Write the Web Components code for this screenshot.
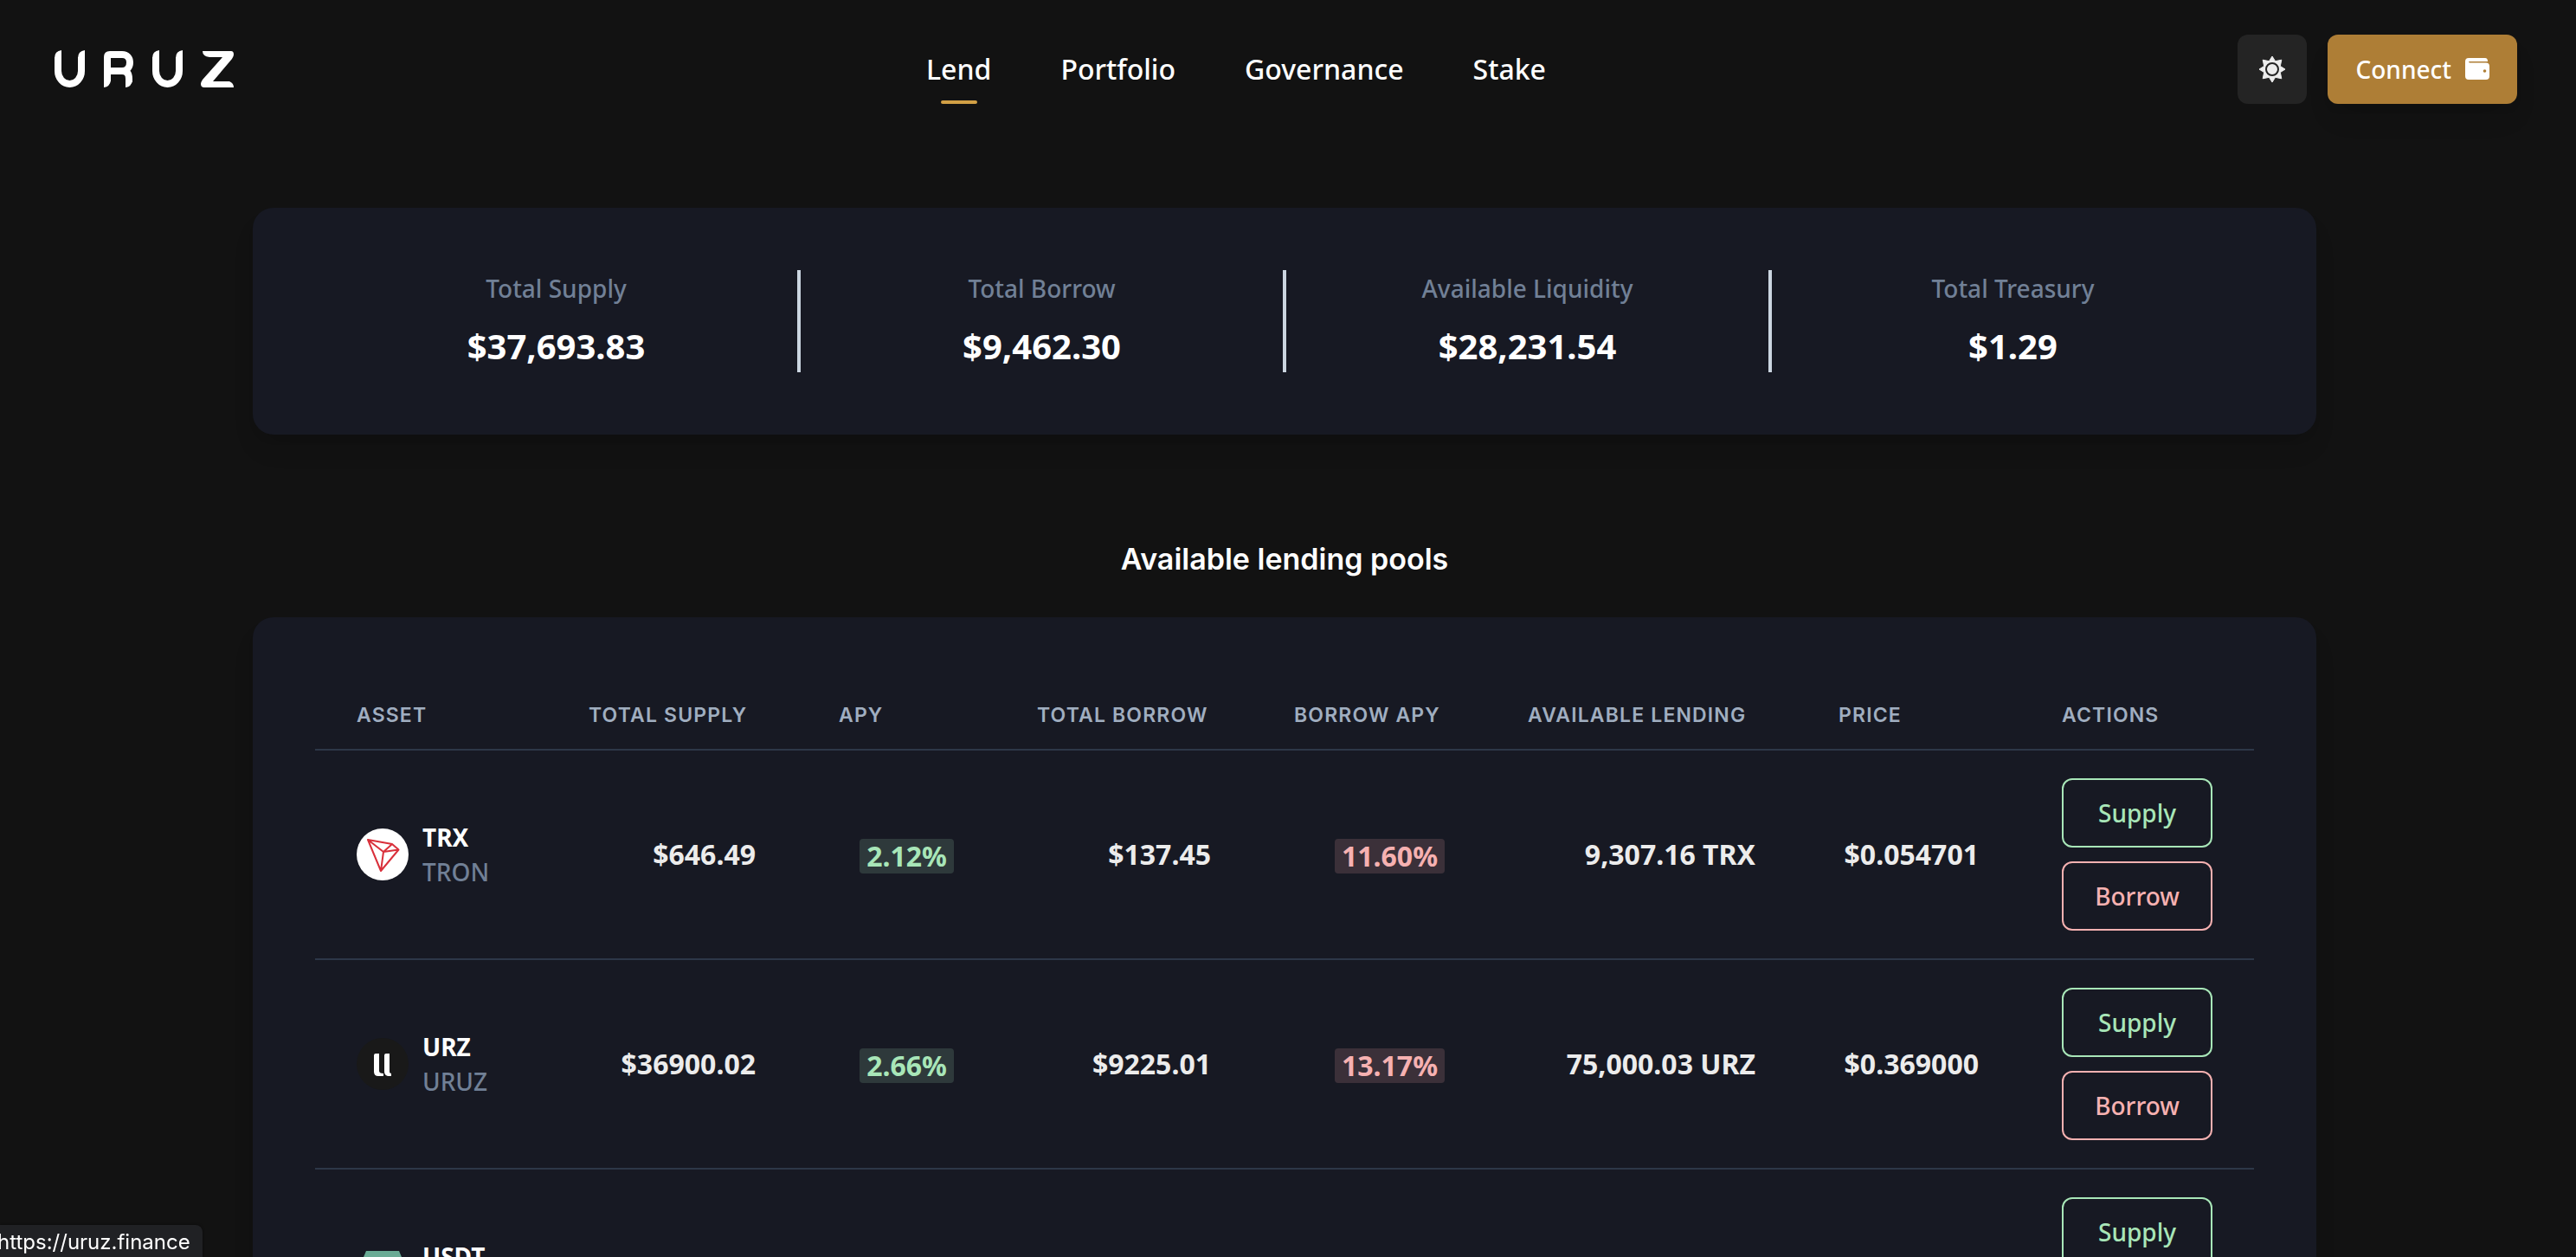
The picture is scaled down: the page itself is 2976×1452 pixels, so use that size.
<!DOCTYPE html>
<html lang="en">
<head>
<meta charset="utf-8">
<meta name="viewport" content="width=device-width, initial-scale=1">
<title>Uruz</title>
<style>
  :root {
    --bg: #121212;
    --card: #171923;
    --line: #2d3748;
    --muted: #718096;
    --head: #a0aec0;
    --green: #a8e6b8;
    --red: #f6b1b1;
    --gold: #d2a045;
  }
  body {
    margin: 0;
    background: var(--bg);
    color: #fff;
    font: 550 28px/40px "Noto Sans", sans-serif;
    height: 100vh;
    overflow: hidden;
  }
</style>
</head>
<body>
<uruz-app></uruz-app>
<script>
const define = (name, html, setup) => customElements.define(name, class extends HTMLElement {
  constructor() {
    super();
    this.attachShadow({ mode: "open" });
  }
  connectedCallback() {
    this.shadowRoot.innerHTML = "<style>*{box-sizing:border-box}</style>" + html;
    if (setup) setup(this, this.shadowRoot);
  }
});

define("uruz-logo", `
<style>
  :host { display: block; }
  a { display: block; }
  svg { display: block; }
</style>
<a href="#" aria-label="Home">
<svg width="208" height="44" viewBox="0 0 208 44" fill="none" stroke="#fff" stroke-width="8">
  <g id="bowl"><path d="M5 8V24a13.500 15 0 0 0 27 0V8"/><path d="M1 9Q1 1 9 0V9ZM28 9Q28 1 36 0V9Z" fill="#fff" stroke="none"/></g>
  <use href="#bowl" x="113"/>
  <path d="M62 36V8q0-3 3-3H79c6 0 9 4 9 9s-3 10-9 10H62M79 24q8 0 8 9v4"/>
  <path d="M58 35V43q7-1 8-8ZM83 35V43q7-1 8-8Z" fill="#fff" stroke="none"/>
  <path d="M172 1H205q3 0 3 4 0 2-2 5L184 36H203q5 2 5 7H174q-4 0-4-4 0-2 2-5L195 8H180q-8-1-8-7Z" fill="#fff" stroke="none"/>
</svg></a>`);

define("nav-link", `
<style>
  :host { display: block; }
  a { display: flex; flex-direction: column; align-items: center; color: #fff; text-decoration: none; font-size: 32px; line-height: 48px; padding-top: 56px; height: 120px; justify-content: space-between; }
  i { width: 42px; height: 4px; border-radius: 2px; }
  :host([active]) i { background: var(--gold); }
</style>
<a href="#"><slot></slot><i></i></a>`);

define("uruz-header", `
<style>
  :host { display: grid; grid-template-columns: 1fr auto 1fr; height: 160px; padding: 0 68px 0 62px; align-items: center; }
  nav { display: flex; gap: 80px; align-self: start; margin-right: 114px; }
  .tools { display: flex; gap: 24px; justify-content: flex-end; }
  .side { display: flex; }
  button { font: inherit; color: #fff; border: 0; border-radius: 12px; height: 80px; display: flex; align-items: center; justify-content: center; cursor: pointer; }
  .theme { width: 80px; background: #242424; padding: 0; }
  .connect { background: #ae7e36; padding: 0 32px; gap: 16px; box-shadow: 0 20px 30px -6px rgba(0,0,0,.1), 0 8px 12px -4px rgba(0,0,0,.06); }
</style>
<div class="side"><uruz-logo></uruz-logo></div>
<nav><nav-link active>Lend</nav-link><nav-link>Portfolio</nav-link><nav-link>Governance</nav-link><nav-link>Stake</nav-link></nav>
<div class="tools">
  <button class="theme" aria-label="Toggle theme">
    <svg width="32" height="32" viewBox="-16 -16 32 32" fill="#ededed">
      <path stroke="#ededed" stroke-width="1" stroke-linejoin="round" d="M0-15 L3.600-9.300 L10.800-10.800 L9.300-3.600 L15 0 L9.300 3.600 L10.800 10.800 L3.600 9.300 L0 15 L-3.600 9.300 L-10.800 10.800 L-9.300 3.600 L-15 0 L-9.300-3.600 L-10.800-10.800 L-3.600-9.300Z"/>
      <circle r="7" stroke="#242424" stroke-width="2"/>
    </svg>
  </button>
  <button class="connect"><span>Connect</span>
    <svg width="28" height="26" viewBox="0 0 28 26"><path fill="#fff" d="M4 0H23q3 0 3 4H5q-1 0-1 .5T5 5.500H24q4 0 4 4V21q0 4-4 4H4q-4 0-4-4V4q0-4 4-4Z"/><circle cx="22.500" cy="15" r="1.800" fill="#ae7e36"/></svg>
  </button>
</div>`);

define("stat-item", `
<style>
  :host { display: flex; flex-direction: column; align-items: center; gap: 16px; flex: 1 1 0; }
  .label { line-height: 42px; color: var(--muted); }
  .value { font-size: 40px; line-height: 60px; font-weight: 700; }
</style>
<div class="label"><slot name="label"></slot></div><div class="value"><slot></slot></div>`);

define("uruz-card", `
<style>
  :host { display: block; background: var(--card); border-radius: 24px; padding: 72px; box-shadow: 0 20px 30px -6px rgba(0,0,0,.1), 0 8px 12px -4px rgba(0,0,0,.05); }
</style>
<slot></slot>`);

define("stats-row", `
<style>
  .row { display: flex; }
  hr { width: 4px; margin: 0; border: 0; background: #cbd5e0; }
</style>
<div class="row">
<stat-item><span slot="label">Total Supply</span>$37,693.83</stat-item><hr>
<stat-item><span slot="label">Total Borrow</span>$9,462.30</stat-item><hr>
<stat-item><span slot="label">Available Liquidity</span>$28,231.54</stat-item><hr>
<stat-item><span slot="label">Total Treasury</span>$1.29</stat-item>
</div>`);

const coins = {
  TRX: `<circle cx="30" cy="30" r="30" fill="#fff"/><path fill="none" stroke="#d9303b" stroke-width="2" stroke-linejoin="round" d="M13 13L41 18L48.500 24.500L28 49ZM13 13L31 27L28 49M31 27L41 18M31 27L48.500 24.500"/>`,
  URZ: `<circle cx="30" cy="30" r="30" fill="#191919"/><path fill="#fff" d="M22 18H26V38Q26 41 31 41V44H25Q20 44 20 39V20Q20 18 22 18ZM34 18H38V39Q38 41 40 41V44H36Q32 43 32 39V20Q32 18 34 18Z"/>`,
  USDT: `<path fill="#6aab95" d="M11 4H49L60 30L30 57L0 30Z"/>`
};

define("asset-cell", `
<style>
  :host { display: flex; align-items: center; gap: 16px; text-align: left; }
  svg { display: block; }
  b { display: block; font-weight: 700; }
  span { display: block; color: var(--muted); }
</style>
<svg width="60" height="60" viewBox="0 0 60 60"></svg>
<div><b></b><span></span></div>`, (el, root) => {
  root.querySelector("svg").innerHTML = coins[el.getAttribute("symbol")];
  root.querySelector("b").textContent = el.getAttribute("symbol");
  root.querySelector("span").textContent = el.getAttribute("name");
});

define("apy-badge", `
<style>
  :host { display: inline-block; vertical-align: middle; font-size: 32px; line-height: 40px; font-weight: 700; padding: 0 8px; border-radius: 4px; color: var(--green); background: rgba(168,230,184,.16); }
  :host([kind="borrow"]) { color: var(--red); background: rgba(246,177,177,.16); }
</style><slot></slot>`);

define("action-button", `
<style>
  :host { display: block; color: var(--green); }
  :host([kind="borrow"]) { color: var(--red); }
  button { display: block; width: 100%; height: 80px; padding: 0; font: inherit; color: inherit; background: none; border: 2px solid; border-radius: 12px; cursor: pointer; }
</style><button><slot></slot></button>`);

define("pool-table", `
<style>
  table { width: 100%; table-layout: fixed; border-collapse: separate; border-spacing: 0; }
  th { padding: 25px 0 23px 48px; text-align: left; white-space: nowrap; font: 600 23px/32px Inter, sans-serif; letter-spacing: .05em; text-transform: uppercase; color: var(--head); border-bottom: 2px solid var(--line); }
  td { padding: 32px 48px; text-align: right; white-space: nowrap; border-bottom: 2px solid var(--line); }
  td.num { font-size: 32px; line-height: 48px; font-weight: 700; color: #ececec; padding-left: 0; }
  .actions { display: flex; flex-direction: column; gap: 16px; }
</style>
<table>
<colgroup><col style="width:268px"><col style="width:289px"><col style="width:229px"><col style="width:297px"><col style="width:270px"><col style="width:359px"><col style="width:258px"><col style="width:270px"></colgroup>
<thead><tr><th>Asset</th><th>Total Supply</th><th>APY</th><th>Total Borrow</th><th>Borrow APY</th><th>Available Lending</th><th>Price</th><th>Actions</th></tr></thead>
<tbody></tbody>
</table>`, (el, root) => {
  const rows = [
    ["TRX", "TRON", "$646.49", "2.12%", "$137.45", "11.60%", "9,307.16 TRX", "$0.054701"],
    ["URZ", "URUZ", "$36900.02", "2.66%", "$9225.01", "13.17%", "75,000.03 URZ", "$0.369000"],
    ["USDT", "", "", "", "", "", "", ""]
  ];
  root.querySelector("tbody").innerHTML = rows.map(([s, n, ts, a, tb, ba, av, p]) => `
<tr><td><asset-cell symbol="${s}" name="${n || "\u00a0"}"></asset-cell></td>
<td class="num">${ts}</td><td>${a && `<apy-badge>${a}</apy-badge>`}</td>
<td class="num">${tb}</td><td>${ba && `<apy-badge kind="borrow">${ba}</apy-badge>`}</td>
<td class="num">${av}</td><td class="num">${p}</td>
<td><div class="actions"><action-button>Supply</action-button><action-button kind="borrow">Borrow</action-button></div></td></tr>`).join("");
});

define("link-status", `
<style>
  :host { position: fixed; left: 0; bottom: 0; height: 37px; padding-right: 14px; background: #202124; border-top-right-radius: 8px; box-shadow: 0 0 3px rgba(0,0,0,.6); font: 400 24px/40px Inter, sans-serif; color: #fff; }
  span { display: block; margin-left: -3px; }
</style><span><slot></slot></span>`);

define("uruz-app", `
<style>
  :host { display: block; }
  main { margin: 0 300px 0 292px; padding-top: 80px; }
  h2 { margin: 0; padding: 120px 0 43px; text-align: center; font: 600 34px/48px Inter, sans-serif; }
</style>
<uruz-header></uruz-header>
<main>
  <uruz-card><stats-row></stats-row></uruz-card>
  <h2>Available lending pools</h2>
  <uruz-card><pool-table></pool-table></uruz-card>
</main>
<link-status>https://uruz.finance</link-status>`);
</script>
</body>
</html>
